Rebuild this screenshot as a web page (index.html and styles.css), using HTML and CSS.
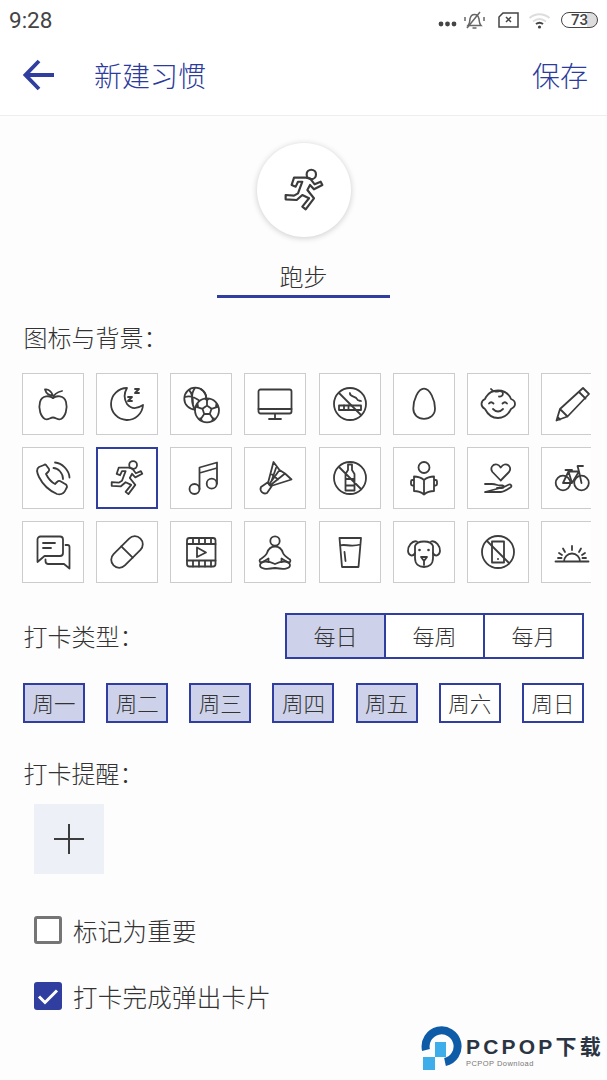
FILE: index.html
```html
<!DOCTYPE html>
<html lang="zh-CN">
<head>
    <meta charset="UTF-8">
    <title>新建习惯</title>
    <link rel="stylesheet" href="styles.css">
</head>
<body>
<div id="box">
    <div class="status">
        <span class="time">9:28</span>
        <div class="status-icons">
            <svg class="s-dots" width="19" height="6" viewBox="0 0 19 6"><circle cx="3" cy="3" r="2.4"/><circle cx="9.5" cy="3" r="2.4"/><circle cx="16" cy="3" r="2.4"/></svg>
            <svg class="s-bell" width="21" height="19" viewBox="0 0 21 19"><path d="M4 14.500c2-2 1.500-4 2-6.500.5-3 2.500-4.500 4.500-4.500s4 1.500 4.500 4.500c.5 2.500 0 4.500 2 6.500z"/><path d="M8.500 17h4M3 17 16 1M1 6v4M20 6v4"/></svg>
            <svg class="s-sim" width="21" height="16" viewBox="0 0 21 16"><path d="M5 1h15v14H1V5z"/><path d="m8 5 5 5M13 5l-5 5"/></svg>
            <svg class="s-wifi" width="23" height="17" viewBox="0 0 23 17"><path class="dim" d="M1.500 6c6-5 14-5 20 0M5 9.500c4-3 9-3 13 0"/><path d="M8 12c2-1.500 5-1.500 7 0" /><circle class="dot" cx="11.500" cy="15" r="1.600"/></svg>
            <div class="battery"><span>73</span></div>
        </div>
    </div>
    <header class="bar">
        <svg class="back" width="34" height="34" viewBox="0 0 34 34"><path d="M31 17H3M16 3 2.500 17 16 31"/></svg>
        <h1 class="title">新建习惯</h1>
        <a class="save">保存</a>
    </header>

    <section class="hero">
        <div class="circle">
            <svg class="ic" width="48" height="48" viewBox="0 0 40 40"><circle cx="26.100" cy="7" r="3.900"/><path d="M21.400 9.700H11.700L9.700 15.800 13.100 17.200 15 13.100H18.600L15 22.800 11.700 24.700 4.700 24.200V27.800L13.900 28.300 18.600 24.200 24.200 26.900 18.600 33.900 21.400 36.100 28.300 26.900 22.800 20 25 15.800 28.300 19.400 35.300 15.800 33.900 13.100 28.900 15.300 25 10.300Z"/></svg>
        </div>
        <div class="name">跑步</div>
    </section>

    <main class="form">
        <div class="label first">图标与背景：</div>
        <div class="icons-wrap">
            <ul class="icons">
                <li><svg class="ic" width="40" height="40" viewBox="0 0 40 40"><path d="M20 14C17 11.500 9 11 7 18 5 25 8 33 12 35 15 36.500 17 33.500 20 33.500S25 36.500 28 35C32 33 35 25 33 18 31 11 23 11.500 20 14Z"/><path d="M20 14Q21 9 29 7M20 11.500C18 7 15 5 12 5.500 13 9 16 11.500 20 11.500Z"/></svg></li>
                <li><svg class="ic" width="40" height="40" viewBox="0 0 40 40"><path d="M20 4A16 16 0 1 0 36 21C30 25 24 25 20 20 17 15 17 9 20 4Z"/><path d="M21 13h4l-4 4h4M28 5h4l-4 4h4"/></svg></li>
                <li><svg class="ic" width="40" height="40" viewBox="0 0 40 40"><circle cx="14.300" cy="14.700" r="11"/><path d="M14 4C10 9 10 19 14 26M4 13C9 11 14 13 20 18M8 6C11 9 12 13 12 20M20 5C23 7 25 9 25 13"/><circle class="solid" cx="26" cy="26.300" r="12"/><path d="M26 21.500l4.500 3.300-1.700 5.200h-5.600l-1.700-5.200zM26 21.500V15M30.500 24.800l6-2M28.800 30l3.700 5.500M23.200 30l-3.700 5.500M21.500 24.800l-6-2"/><path class="fill" d="M23 14.800h6L26 17.500zM35 18l2.500 5.500-3.500-.8zM17 18l-2.500 5.500 3.500-.8zM19 33l3.500 4-5-1zM33 33l-3.500 4 5-1z"/></svg></li>
                <li><svg class="ic" width="40" height="40" viewBox="0 0 40 40"><rect x="3.500" y="5.500" width="33" height="24" rx="2"/><path d="M3.500 25H36.500M20 30V35M14 35H26"/></svg></li>
                <li><svg class="ic" width="40" height="40" viewBox="0 0 40 40"><circle cx="20" cy="20" r="16"/><path d="M9 9 31 31"/><rect x="9" y="21.500" width="22" height="4.500"/><path d="M14 21.500V26M18.500 21.500V26M20 9C19 13 26 12 27 15 27.500 17 29.500 16.500 31 17"/></svg></li>
                <li><svg class="ic" width="40" height="40" viewBox="0 0 40 40"><path d="M20 4.700C14 4.700 9.300 16 9.300 24.500 9.300 31 14 34.800 20 34.800S31 31 31 24.500C31 16 26 4.700 20 4.700Z"/></svg></li>
                <li><svg class="ic" width="40" height="40" viewBox="0 0 40 40"><path d="M8 13C11 8 15 6.500 20 6.500 27 6.500 31 10 33 15 36 16 37 18 37 20S35 24 33 25C30 31 26 34 20 34S10 31 7 25C5 24 3.500 22 3.500 20S5 16 7 15Z"/><path d="M13 5C15 8 20 8 22 7 26 7 26 13 21 12.500M11 19.500Q13 17 15.500 19.500M24.500 19.500Q27 17 29 19.500M15 25Q20 30 25 25"/></svg></li>
                <li><svg class="ic" width="40" height="40" viewBox="0 0 40 40"><path d="M4.500 36.500 8 25 31 4 37 10 15.500 32.500ZM8 25 15.500 32.500M27 8 33.500 14.500M5.500 33 8 35.500"/></svg></li>

                <li><svg class="ic" width="40" height="40" viewBox="0 0 40 40"><path d="M11 7 6 9C3 11 4 15 6 19 10 27 17 33 24 36 28 37 31 36 33 31L34 29C34 28 33.500 27 33 26.500L27 23C26 22.500 25 23 24 24L22 26C18 24 15 20 13 16L15.500 13.500C16 13 16.500 12 16 11L13 7C12.500 6.500 11.500 6.500 11 7Z"/><path d="M20.500 10C25 10 30 15 30 21M22 4.500C29 5 36 12 36.500 19.500"/></svg></li>
                <li class="on"><svg class="ic" width="40" height="40" viewBox="0 0 40 40"><circle cx="26.100" cy="7" r="3.900"/><path d="M21.400 9.700H11.700L9.700 15.800 13.100 17.200 15 13.100H18.600L15 22.800 11.700 24.700 4.700 24.200V27.800L13.900 28.300 18.600 24.200 24.200 26.900 18.600 33.900 21.400 36.100 28.300 26.900 22.800 20 25 15.800 28.300 19.400 35.300 15.800 33.900 13.100 28.900 15.300 25 10.300Z"/></svg></li>
                <li><svg class="ic" width="40" height="40" viewBox="0 0 40 40"><circle cx="13.500" cy="31" r="5"/><circle cx="30.700" cy="25.700" r="5"/><path d="M18.500 31V9.500L36 4.500V25.700M18.500 15 36 10"/></svg></li>
                <li><svg class="ic" width="40" height="40" viewBox="0 0 40 40"><path d="M13 25 18.500 4 24.500 12 30 15.500 36.500 21.500 16 28M14 26.500 24.500 12M15 27.500 30 15.500M17 16.500 23 21.500M21 10 16.500 23"/><path d="M12.500 24.500 6 29A4.500 4.500 0 0 0 12 35L16.500 28.500Z"/></svg></li>
                <li><svg class="ic" width="40" height="40" viewBox="0 0 40 40"><circle cx="20" cy="20" r="16"/><path d="M9 9 31 31M18 6.500H22V12L24.500 16V32.500H15.500V16L18 12ZM15.500 21H24.500M15.500 27.500H24.500"/></svg></li>
                <li><svg class="ic" width="40" height="40" viewBox="0 0 40 40"><circle cx="20" cy="9.500" r="5.500"/><path d="M20 22C17 19.500 13 18.500 10 18.500V33C14 33 17 34 20 36.500 23 34 26 33 30 33V18.500C27 18.500 23 19.500 20 22ZM20 22V36.500M10 22H8.500A1.500 1.500 0 0 0 7 23.500V26A1.500 1.500 0 0 0 8.500 27.500H10M30 22H31.500A1.500 1.500 0 0 1 33 23.500V26A1.500 1.500 0 0 1 31.500 27.500H30"/></svg></li>
                <li><svg class="ic" width="40" height="40" viewBox="0 0 40 40"><path d="M22.700 22.500 14.500 14C11.500 10 15 5.500 19 6.500 21 7 22 8.500 22.700 9.500 23.500 8.500 24.500 7 26.500 6.500 30.500 5.500 34 10 31 14Z"/><path d="M7 26H14C17 26 19 27 21 27.500H25C27 28 26 30 24 30H19M26 29 31 26.500C33 26 34 28 33 29 29 32 26 34 23 34H7Z"/></svg></li>
                <li><svg class="ic" width="40" height="40" viewBox="0 0 40 40"><circle cx="11" cy="25" r="7.300"/><circle cx="29.500" cy="25" r="7.300"/><path d="M11 25 16.500 13.500H27L29.500 25M11 25H20L27 13.500M16.500 13.500 20 25M27 13.500 25.500 8H31M13.500 12H20"/></svg></li>

                <li><svg class="ic" width="40" height="40" viewBox="0 0 40 40"><path d="M7.500 4.500H27A3 3 0 0 1 30 7.500V21A3 3 0 0 1 27 24H11.500L4.500 30V7.500A3 3 0 0 1 7.500 4.500ZM10 11H22M10 16H18"/><path d="M32.500 13H34.500A2 2 0 0 1 36.500 15V36.500L31 32H15A3 3 0 0 1 12.500 29V27.500"/></svg></li>
                <li><svg class="ic" width="40" height="40" viewBox="0 0 40 40"><rect x="1" y="12" width="38" height="16" rx="8" transform="rotate(-45 20 20)"/><path d="M14.300 14.300 25.700 25.700"/></svg></li>
                <li><svg class="ic" width="40" height="40" viewBox="0 0 40 40"><rect x="6" y="6" width="28.500" height="28.500" rx="2.500"/><path d="M6 12H34.500M6 28.500H34.500M12 6V12M18 6V12M24 6V12M30 6V12M12 28.500V34.500M18 28.500V34.500M24 28.500V34.500M30 28.500V34.500M16 15.500 25 20.500 16 25Z"/></svg></li>
                <li><svg class="ic" width="40" height="40" viewBox="0 0 40 40"><circle cx="20" cy="9" r="4.700"/><path d="M20 32C14 29 6 28 5 33 5 37 11 37.500 20 36 29 37.500 35 37 35 33 34 28 26 29 20 32Z"/><path d="M20 14.500C15 14.500 13 18 12 21 11 24 7 26 5 27.500 4 29 5 31 7 30.500L13.500 26.500V30M20 14.500C25 14.500 27 18 28 21 29 24 33 26 35 27.500 36 29 35 31 33 30.500L26.500 26.500V30"/></svg></li>
                <li><svg class="ic" width="40" height="40" viewBox="0 0 40 40"><path d="M9.500 6H31L28.500 35H12ZM10 13.500C15 11.500 20 15.500 30.500 12.500M14.500 20 15.500 29"/></svg></li>
                <li><svg class="ic" width="40" height="40" viewBox="0 0 40 40"><path d="M11 14V26C11 32 15 35 20 35S29 32 29 26V14C27 8 13 8 11 14Z"/><path d="M13 9.500C8 8 3.500 15 4 19 4.500 24 9 25 11 21M27 9.500C32 8 36.500 15 36 19 35.500 24 31 25 29 21M17 25H23L20 29ZM20 29V33"/><circle class="fill" cx="15.500" cy="18" r="1.300"/><circle class="fill" cx="24.500" cy="18" r="1.300"/></svg></li>
                <li><svg class="ic" width="40" height="40" viewBox="0 0 40 40"><circle cx="20" cy="20" r="16"/><path d="M9 9 31 31"/><rect x="14" y="9.500" width="12" height="21"/><circle class="fill" cx="20" cy="27" r="1"/></svg></li>
                <li><svg class="ic" width="40" height="40" viewBox="0 0 40 40"><path d="M3.500 29.500H36.500M12 29.500A8 8 0 0 1 28 29.500M20 14V18M11 16.500 13 20M29 16.500 27 20M7 21 10 23M33 21 30 23M6 26H9.500M30.500 26H34"/></svg></li>
            </ul>
        </div>

        <div class="type-row">
            <div class="label">打卡类型：</div>
            <div class="tabs">
                <span class="tab on">每日</span>
                <span class="tab">每周</span>
                <span class="tab">每月</span>
            </div>
        </div>

        <div class="days">
            <span class="day on">周一</span>
            <span class="day on">周二</span>
            <span class="day on">周三</span>
            <span class="day on">周四</span>
            <span class="day on">周五</span>
            <span class="day">周六</span>
            <span class="day">周日</span>
        </div>

        <div class="label remind">打卡提醒：</div>
        <div class="add">
            <svg width="30" height="30" viewBox="0 0 30 30"><path d="M0 15H30M15 0V30"/></svg>
        </div>

        <label class="check first-check"><i class="cb"></i>标记为重要</label>
        <label class="check second-check">
            <i class="cb on"><svg width="28" height="28" viewBox="0 0 28 28"><path d="M5 14.500 11 20.500 23 8.500"/></svg></i>打卡完成弹出卡片
        </label>
    </main>

    <div class="mark">
        <svg width="42" height="46" viewBox="0 0 42 46"><path class="mark-ring" d="M5 24A16 16 0 1 1 24 36"/><path class="mark-in" d="M14 16H25V31H14V44H2V31H14Z"/></svg>
        <div class="mark-text">
            <b>PCPOP下载</b>
            <span>PCPOP Download</span>
        </div>
    </div>
</div>
</body>
</html>
```

FILE: styles.css
```css
* {
    margin: 0;
    padding: 0;
    list-style: none;
    box-sizing: border-box;
}
body {
    font-family: "Noto Sans CJK SC", "Noto Sans", sans-serif;
    font-weight: 300;
    background: #fdfdfd;
    color: #333;
}
#box {
    position: relative;
    width: 607px;
    height: 1080px;
    overflow: hidden;
}

/* status bar */
.status {
    height: 40px;
    background: #fff;
    display: flex;
    align-items: center;
    justify-content: space-between;
    padding: 0 9px;
}
.time {
    font-family: Roboto, sans-serif;
    font-weight: 400;
    font-size: 22.500px;
    color: #444;
}
.status-icons {
    display: flex;
    align-items: center;
}
.status-icons svg {
    fill: none;
    stroke: #444;
    stroke-width: 1.500;
}
.s-dots {
    margin-top: 8px;
    fill: #444 !important;
    stroke: none !important;
}
.s-bell {
    margin-left: 7px;
    stroke: #666 !important;
}
.s-sim {
    margin-left: 13px;
}
.s-wifi {
    margin-left: 9px;
    stroke-width: 2 !important;
}
.s-wifi .dim {
    stroke: #ddd;
}
.s-wifi .dot {
    fill: #444;
    stroke: none;
}
.battery {
    width: 37px;
    height: 16px;
    margin-left: 10px;
    border: 1.500px solid #444;
    border-radius: 8px;
    background: linear-gradient(90deg, #fff 72%, #ddd 72%);
    font-family: Roboto, sans-serif;
    font-size: 15px;
    font-weight: 500;
    line-height: 14px;
    text-align: center;
    color: #444;
}

/* toolbar */
.bar {
    height: 76px;
    background: #fff;
    border-bottom: 1px solid #eee;
    display: flex;
    align-items: center;
    padding: 0 19px 6px 23px;
    color: #2c3b9c;
}
.back {
    fill: none;
    stroke: #303f9f;
    stroke-width: 3.800;
}
.title {
    flex: 1;
    margin-left: 37px;
    font-size: 28px;
    font-weight: 300;
}
.save {
    font-size: 28px;
}

/* icons */
.ic {
    fill: none;
    stroke: #3c3c3c;
    stroke-width: 1.800;
    stroke-linejoin: round;
    stroke-linecap: round;
}
.ic .solid {
    fill: #fff;
}
.ic .fill {
    fill: #3c3c3c;
    stroke: none;
}

.hero {
    display: flex;
    flex-direction: column;
    align-items: center;
    padding-top: 27px;
}
.circle {
    width: 94px;
    height: 94px;
    border-radius: 50%;
    background: #fff;
    box-shadow: 0 1px 6px rgba(0, 0, 0, .2);
    display: flex;
    align-items: center;
    justify-content: center;
}
.name {
    width: 173px;
    height: 38px;
    margin-top: 23px;
    border-bottom: 3px solid #303f9f;
    font-size: 24px;
    line-height: 31px;
    text-align: center;
}

.form {
    padding: 0 23px;
}
.label {
    padding-left: .5px;
    font-size: 24px;
    line-height: 34px;
}
.first {
    margin-top: 22px;
}
.icons-wrap {
    width: 569px;
    margin: 19px 0 0 -1px;
    overflow: hidden;
}
.icons {
    display: grid;
    grid-template-columns: repeat(8, 62px);
    gap: 12.200px 12.140px;
    width: 582px;
}
.icons li {
    width: 62px;
    height: 62px;
    border: 1px solid #ccc;
    background: #fff;
    display: flex;
    align-items: center;
    justify-content: center;
}
.icons li.on {
    border: 2px solid #303f9f;
}

.type-row {
    display: flex;
    align-items: center;
    justify-content: space-between;
    margin-top: 30px;
}
.tabs {
    display: flex;
    width: 299px;
    height: 46px;
    border: 2px solid #303f9f;
    background: #fff;
}
.tab {
    flex: 1;
    font-size: 22px;
    line-height: 41px;
    text-align: center;
    border-right: 2px solid #303f9f;
}
.tab:last-child {
    border-right: 0;
}
.tab.on {
    background: #cdd1e9;
}
.days {
    display: flex;
    justify-content: space-between;
    margin-top: 24px;
}
.day {
    width: 62px;
    height: 40px;
    border: 2px solid #303f9f;
    background: #fff;
    font-size: 21.500px;
    line-height: 35px;
    text-align: center;
}
.day.on {
    background: #cdd1e9;
}
.remind {
    margin-top: 33px;
}
.add {
    width: 70px;
    height: 70px;
    margin: 14px 0 0 11px;
    background: #eef0f8;
    display: flex;
    align-items: center;
    justify-content: center;
}
.add svg {
    fill: none;
    stroke: #3c3c3c;
    stroke-width: 2;
}
.check {
    display: flex;
    align-items: center;
    height: 28px;
    margin-left: 11px;
    font-size: 24.500px;
    letter-spacing: .25px;
}
.first-check {
    margin-top: 42px;
}
.second-check {
    margin-top: 38px;
}
.cb {
    width: 28px;
    height: 28px;
    margin-right: 11px;
    border: 3px solid #757575;
    border-radius: 3px;
    background: #fff;
    flex-shrink: 0;
}
.cb.on {
    border: 0;
    background: #303f9f;
}
.cb svg {
    display: block;
    fill: none;
    stroke: #fff;
    stroke-width: 3;
}

/* watermark over the page corner */
.mark {
    position: absolute;
    left: 421px;
    top: 1026px;
    display: flex;
    align-items: flex-start;
}
.mark-ring {
    fill: none;
    stroke: #0e5ca8;
    stroke-width: 8;
}
.mark-in {
    fill: #3daeea;
}
.mark-text {
    display: flex;
    flex-direction: column;
    margin: 9px 0 0 3px;
}
.mark-text b {
    font-family: "Liberation Sans", "Noto Sans CJK SC", sans-serif;
    font-size: 21px;
    font-weight: 700;
    line-height: 24px;
    letter-spacing: 3.200px;
    white-space: nowrap;
    color: #2b3442;
}
.mark-text span {
    font-family: "Liberation Sans", sans-serif;
    font-weight: 400;
    font-size: 7.500px;
    line-height: 9px;
    letter-spacing: .45px;
    color: #777;
}
```
